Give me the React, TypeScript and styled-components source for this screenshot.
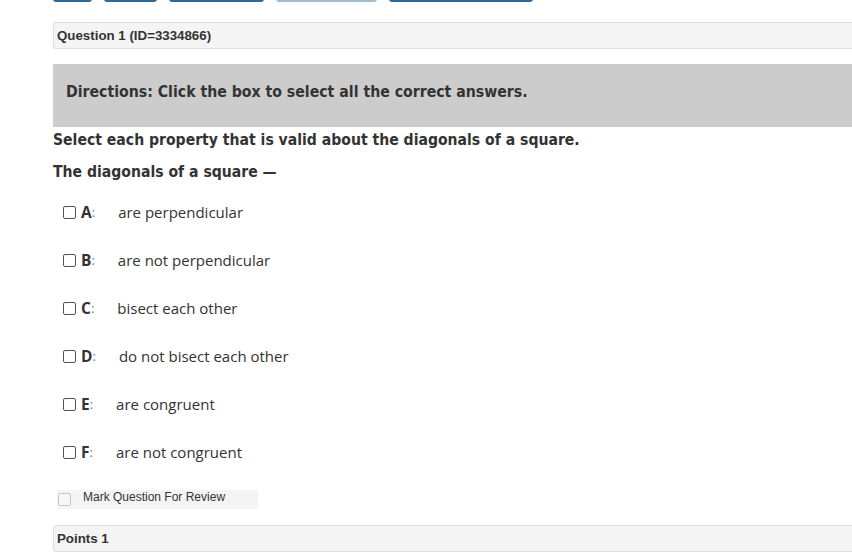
import React from "react";
import styled, { createGlobalStyle } from "styled-components";

const Global = createGlobalStyle`
  html, body { margin: 0; padding: 0; background: #fff; overflow: hidden; }
  body { font-family: "Liberation Sans", Arial, sans-serif; color: #333; }
`;

const Page = styled.div`
  width: 852px;
  height: 552px;
  overflow: hidden;
`;

const Content = styled.div`
  margin-left: 53px;
  width: 860px;
  display: flex;
  flex-direction: column;
`;

const ButtonBar = styled.div`
  display: flex;
  gap: 12px;
  margin-top: -28px;
  height: 30px;
`;

const TopButton = styled.div<{ $w: number; $light?: boolean }>`
  width: ${(p) => p.$w}px;
  height: 30px;
  box-sizing: border-box;
  border-radius: 3px;
  background: ${(p) => (p.$light ? "#d9e6f0" : "#3f7fb0")};
  border: 1px solid ${(p) => (p.$light ? "#9fbcd3" : "#2e6a98")};
  border-bottom-width: 2px;
`;

const Panel = styled.div<{ $top: number }>`
  margin-top: ${(p) => p.$top}px;
  height: 27px;
  box-sizing: border-box;
  background: #f4f4f4;
  border: 1px solid #dddddd;
  border-right: none;
  border-radius: 3px 0 0 3px;
  display: flex;
  align-items: center;
  padding-left: 3px;
  font-family: "Liberation Sans", Arial, sans-serif;
  font-weight: bold;
  font-size: 13.3px;
  color: #333;
`;

const Directions = styled.div`
  margin-top: 15px;
  height: 63px;
  box-sizing: border-box;
  padding: 0 0 8px 13px;
  background: #cccccc;
  display: flex;
  align-items: center;
  font-family: "DejaVu Sans Condensed", "DejaVu Sans", sans-serif;
  font-weight: bold;
  font-size: 15.7px;
  color: #333;
`;

const Stem = styled.div<{ $top: number }>`
  margin-top: ${(p) => p.$top}px;
  height: 22px;
  line-height: 22px;
  font-family: "DejaVu Sans Condensed", "DejaVu Sans", sans-serif;
  font-weight: bold;
  font-size: 15.6px;
  color: #333;
`;

const Options = styled.div`
  margin-top: 18px;
  display: flex;
  flex-direction: column;
  gap: 26px;
  padding-left: 10px;
`;

const Option = styled.label`
  display: flex;
  align-items: center;
  height: 22px;
  font-family: "Open Sans", sans-serif;
  font-size: 15px;
  color: #333;
`;

const Box = styled.input`
  appearance: none;
  margin: 0 5px 0 0;
  width: 13px;
  height: 13px;
  box-sizing: border-box;
  border: 1px solid #555;
  border-radius: 2px;
  background: #fff;
`;

const Letter = styled.span`
  font-weight: bold;
  font-family: "Open Sans", sans-serif;
  font-size: 15.5px;
`;

const Colon = styled.span`
  font-size: 13px;
  color: #777;
  margin-right: 23px;
`;

const Review = styled.div`
  margin-top: 27px;
  margin-left: 4px;
  width: 201px;
  height: 19px;
  background: #f4f4f4;
  display: flex;
  align-items: flex-start;
  line-height: 15px;
  font-family: "Liberation Sans", Arial, sans-serif;
  font-size: 12px;
  color: #333;
`;

const ReviewBox = styled.input`
  appearance: none;
  margin: 3px 12px 0 1px;
  width: 13px;
  height: 13px;
  box-sizing: border-box;
  border: 1px solid #c8c8c8;
  border-radius: 2px;
  background: #f7f7f7;
`;

const options = [
  ["A", "are perpendicular"],
  ["B", "are not perpendicular"],
  ["C", "bisect each other"],
  ["D", "do not bisect each other"],
  ["E", "are congruent"],
  ["F", "are not congruent"],
];

export default function App() {
  return (
    <Page>
      <Global />
      <Content>
        <ButtonBar>
          <TopButton $w={39} />
          <TopButton $w={53} />
          <TopButton $w={95} />
          <TopButton $w={101} $light />
          <TopButton $w={144} />
        </ButtonBar>
        <Panel $top={20}>Question 1 (ID=3334866)</Panel>
        <Directions>Directions: Click the box to select all the correct answers.</Directions>
        <Stem $top={2}>Select each property that is valid about the diagonals of a square.</Stem>
        <Stem $top={10}>The diagonals of a square —</Stem>
        <Options>
          {options.map(([l, t]) => (
            <Option key={l}>
              <Box type="checkbox" />
              <Letter>{l}</Letter>
              <Colon>:</Colon>
              {t}
            </Option>
          ))}
        </Options>
        <Review>
          <ReviewBox type="checkbox" />
          Mark Question For Review
        </Review>
        <Panel $top={16}>Points 1</Panel>
      </Content>
    </Page>
  );
}
